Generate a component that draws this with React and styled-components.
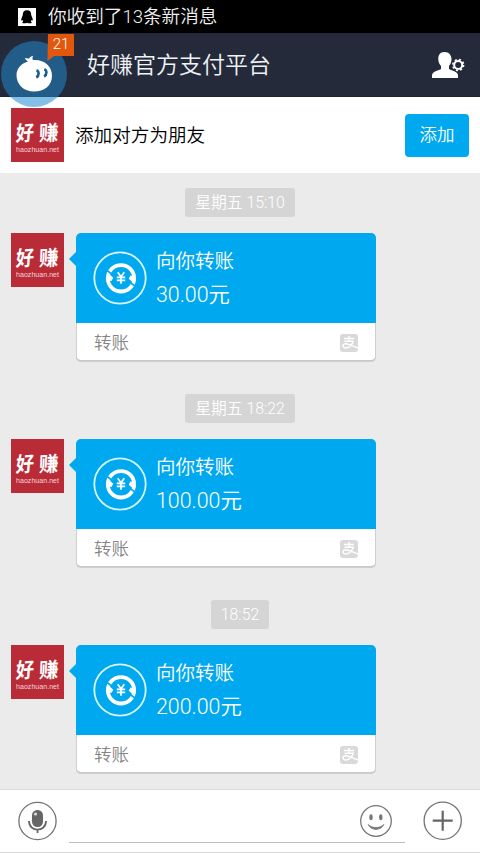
import React from "react";
import styled, { createGlobalStyle } from "styled-components";

const Global = createGlobalStyle`
  * { box-sizing: border-box; }
  body {
    margin: 0;
    background: #ebebeb;
    font-family: Roboto, "Noto Sans CJK SC", sans-serif;
    font-weight: 350;
  }
`;

const Screen = styled.div`
  width: 480px;
  height: 853px;
  display: flex;
  flex-direction: column;
  overflow: hidden;
  position: relative;
`;

const StatusBar = styled.div`
  height: 33px;
  flex: none;
  background: #000;
  display: flex;
  align-items: center;
  padding: 1px 0 0 18px;
  gap: 12px;
  color: #f2f2f2;
  font-size: 18.6px;
  line-height: 32px;
  white-space: nowrap;
  svg { display: block; }
`;

const Header = styled.header`
  height: 64px;
  flex: none;
  background: #252a3a;
  display: flex;
  align-items: center;
  justify-content: space-between;
  padding: 0 15px 0 87px;
  border-bottom: 1px solid #1c2430;
`;

const Title = styled.h1`
  margin: 0;
  padding-top: 3px;
  color: #eef3f8;
  font-size: 23px;
  font-weight: 350;
  line-height: 60px;
`;

const Floating = styled.div`
  position: absolute;
  left: 0;
  top: 33px;
  width: 76px;
  height: 76px;
  svg { display: block; }
`;

const Count = styled.span`
  position: absolute;
  left: 48px;
  top: 1px;
  width: 26px;
  height: 22px;
  color: #fff;
  font-size: 15px;
  font-weight: 300;
  line-height: 21px;
  text-align: center;
`;

const AddBar = styled.div`
  height: 76px;
  flex: none;
  background: #fff;
  display: flex;
  align-items: center;
  padding: 0 11px;
  gap: 11px;
`;

const AddText = styled.span`
  flex: 1;
  padding-top: 2px;
  color: #000;
  font-size: 18.6px;
  line-height: 30px;
`;

const AddButton = styled.button`
  width: 64px;
  height: 43px;
  border: 0;
  border-radius: 4px;
  padding: 0 0 3px;
  background: #00a9ef;
  color: #fff;
  font: inherit;
  font-size: 17.5px;
`;

const Avatar = styled.div`
  width: 53px;
  height: 54px;
  flex: none;
  background: #ba2b38;
  svg { display: block; }
`;

const Chat = styled.main`
  flex: 1;
  background: #ebebeb;
  padding: 15px 0 0;
  display: flex;
  flex-direction: column;
  gap: 32px;
`;

const Group = styled.section`
  display: flex;
  flex-direction: column;
  gap: 16px;
`;

const Time = styled.time`
  align-self: center;
  height: 29px;
  padding: 0 10px;
  border-radius: 3px;
  background: #d5d5d5;
  color: #fff;
  font-size: 15.8px;
  line-height: 30px;
`;

const MessageRow = styled.div`
  display: flex;
  padding-left: 11px;
  height: 129px;
`;

const Tail = styled.svg`
  display: block;
  width: 12px;
  height: 53px;
  flex: none;
`;

const Card = styled.article`
  width: 300px;
  height: 129px;
  border-radius: 5px;
  background: #fff;
  box-shadow: inset 0 0 0 1px #cfcfcf, inset 0 -2px 0 #c9c9c9;
  overflow: hidden;
`;

const CardTop = styled.div`
  height: 90px;
  background: #00a9ef;
  display: flex;
  padding-left: 17px;
  gap: 9px;
  svg { display: block; margin-top: 18px; }
`;

const CardText = styled.div`
  padding-top: 12px;
  color: #fff;
  font-size: 19.5px;
  line-height: 33px;
`;

const Amount = styled.div`
  font-size: 21.4px;
`;

const CardFoot = styled.div`
  height: 39px;
  display: flex;
  justify-content: space-between;
  align-items: center;
  padding: 0 18px;
  color: #858585;
  font-size: 17.5px;
  line-height: 38px;
`;

const Composer = styled.footer`
  height: 64px;
  flex: none;
  background: #fff;
  border-top: 1px solid #dcdcdc;
  border-bottom: 1px solid #d8d8d8;
  display: flex;
  align-items: flex-start;
  padding: 11px 0 0 18px;
  svg { display: block; }
`;

const Field = styled.div`
  width: 336px;
  height: 42px;
  flex: none;
  margin: 0 18px 0 12px;
  border-bottom: 1px solid #bdbdbd;
  display: flex;
  justify-content: flex-end;
  padding: 3px 13px 0 0;
`;

function BrandAvatar() {
  return (
    <Avatar>
      <svg width="53" height="54" viewBox="0 0 53 54">
        <g fill="#fff" fontFamily='"Noto Sans CJK SC", sans-serif' fontWeight="700">
          <text transform="translate(4.500 33.200) rotate(-4) skewX(-8) scale(.9 1.04)" fontSize="20">好</text>
          <text transform="translate(27.800 33) rotate(-3) skewX(-5) scale(.98 1.04)" fontSize="20">赚</text>
        </g>
        <text x="5" y="43.500" textLength="43" fill="#f6d5d8" fontFamily='"Liberation Sans", sans-serif' fontSize="7">haozhuan.net</text>
      </svg>
    </Avatar>
  );
}

function TransferIcon() {
  return (
    <svg width="54" height="54" viewBox="0 0 54 54" fill="none">
      <circle cx="27" cy="27" r="25.700" stroke="#d9f6ff" strokeWidth="1.800" />
      <circle cx="28" cy="27.300" r="13.200" stroke="#fff" strokeWidth="3.800" />
      <path d="M12.800 18.500l7.200 5.500M43.200 36l-7.200-5.500" stroke="#00a9ef" strokeWidth="1.600" />
      <path d="M14.300 21.500l6 5.200-1.800 3.300-4.500-1zM41.700 33l-6-5.200 1.800-3.300 4.500 1z" fill="#fff" />
      <path d="M24.700 21.300l3.300 4.500 3.300-4.500M23.800 26.300h8.400M23.800 29.300h8.400M28 25.500v7.300" stroke="#fff" strokeWidth="1.700" />
    </svg>
  );
}

function PayMark() {
  return (
    <svg width="18" height="18" viewBox="0 0 18 18">
      <rect width="18" height="18" rx="3" fill="#d9d9d9" />
      <g fill="none" stroke="#fff" strokeWidth="1.400">
        <path d="M4 4.500h10M9 2v5M4.500 7.200h8.700c-.8 3-3.800 6.800-7.100 6.800-4.300 0-3.800-4.200-.4-4.200 3.300 0 6.200 2.200 12.300 4.200" />
      </g>
    </svg>
  );
}

const messages = [
  { time: "星期五 15:10", amount: "30.00元" },
  { time: "星期五 18:22", amount: "100.00元" },
  { time: "18:52", amount: "200.00元" },
];

export default function App() {
  return (
    <Screen>
      <Global />
      <StatusBar>
        <svg width="18" height="18" viewBox="0 0 18 18">
          <rect width="18" height="18" fill="#fff" />
          <path d="M9 2.300c-3 0-4.300 2-4.200 4.800L3.300 11c-.3 1.500.3 2 1.200.9l.7 1.300-1 1.200c.5 1.200 3.600 1 4.800.3 1.200.7 4.300.9 4.800-.3l-1-1.200.7-1.300c.9 1.100 1.500.6 1.200-.9l-1.500-3.900C13.300 4.300 12 2.300 9 2.300z" fill="#000" />
        </svg>
        你收到了13条新消息
      </StatusBar>
      <Header>
        <Title>好赚官方支付平台</Title>
        <svg width="34" height="28" viewBox="0 0 34 28">
          <path d="M13.500 1C8.800 1 7 4.500 7.300 8.700c.2 3 1.500 4.800 2.700 6.300v3C6.500 20 1.800 20.200 1 24v3h26v-3c-.8-3.800-5.600-4-9-6v-3c1.200-1.500 2.300-3.300 2.500-6.300C20.700 4.500 18.200 1 13.500 1z" fill="#fff" />
          <circle cx="27.200" cy="14" r="7.200" fill="#252a3a" />
          <circle cx="27.200" cy="14" r="4" fill="none" stroke="#fff" strokeWidth="2" />
          <circle cx="27.200" cy="14" r="5.400" fill="none" stroke="#fff" strokeWidth="1.600" strokeDasharray="2.120 2.120" />
        </svg>
      </Header>
      <AddBar>
        <BrandAvatar />
        <AddText>添加对方为朋友</AddText>
        <AddButton>添加</AddButton>
      </AddBar>
      <Chat>
        {messages.map((m) => (
          <Group key={m.time}>
            <Time>{m.time}</Time>
            <MessageRow>
              <BrandAvatar />
              <Tail viewBox="0 0 12 53">
                <path d="M12 19L5 26l7 7z" fill="#00a9ef" />
              </Tail>
              <Card>
                <CardTop>
                  <TransferIcon />
                  <CardText>
                    <div>向你转账</div>
                    <Amount>{m.amount}</Amount>
                  </CardText>
                </CardTop>
                <CardFoot>
                  <span>转账</span>
                  <PayMark />
                </CardFoot>
              </Card>
            </MessageRow>
          </Group>
        ))}
      </Chat>
      <Composer>
        <svg width="39" height="40" viewBox="0 0 39 40" fill="none">
          <circle cx="19.500" cy="20" r="18.600" stroke="#737373" strokeWidth="1.300" />
          <rect x="14" y="9" width="11" height="17" rx="5.200" fill="#666" />
          <path d="M11 20c0 11.500 17 11.500 17 0M19.500 28.500V32" stroke="#666" strokeWidth="1.800" />
          <circle cx="17.500" cy="13" r="1.600" fill="#ddd" />
        </svg>
        <Field>
          <svg width="32" height="34" viewBox="0 0 32 34" fill="none">
            <circle cx="16" cy="17" r="15.300" stroke="#777" strokeWidth="1.300" />
            <ellipse cx="11" cy="13.300" rx="1.700" ry="3" fill="#777" />
            <ellipse cx="20.800" cy="13.300" rx="1.700" ry="3" fill="#777" />
            <path d="M8 20.500c3.500 6.500 12.500 6.500 16 0-4 4-12 4-16 0z" fill="#777" stroke="#777" strokeWidth=".8" />
          </svg>
        </Field>
        <svg width="39" height="40" viewBox="0 0 39 40" fill="none">
          <circle cx="19.700" cy="19.700" r="18.600" stroke="#737373" strokeWidth="1.300" />
          <path d="M9.700 19.700h20M19.700 9.700v20" stroke="#666" strokeWidth="2.200" />
        </svg>
      </Composer>
      <Floating>
        <svg width="76" height="76" viewBox="0 0 76 76">
          <circle cx="34" cy="41" r="33" fill="#1f89cf" fillOpacity=".54" />
          <path d="M28 28.500c-1.400-1-2.500-2-3.300-3.500 2 .3 3 .3 4.300.8.300-1.400 2-2.600 4.200-3-.8 1.300-1 2.600-.3 4.200C44 26 52 33 52 42.500 52 53 44 58.500 34 58.500S16.500 52 16.500 42c0-6 4.500-11.500 11.500-13.500z" fill="#fff" />
          <path d="M36.500 37.300c2.800 1 2.800 5.500-.2 7.200M44.300 36.300c2.800 1 2.800 5.500-.2 7.200" fill="none" stroke="#1f5d8b" strokeWidth="2.600" />
          <path d="M34.500 40h2.200M42.300 39h2.200" stroke="#fff" strokeWidth="1" />
          <path d="M48 1h26v22H54l-6.500 5z" fill="#e2570c" />
        </svg>
        <Count>21</Count>
      </Floating>
    </Screen>
  );
}
